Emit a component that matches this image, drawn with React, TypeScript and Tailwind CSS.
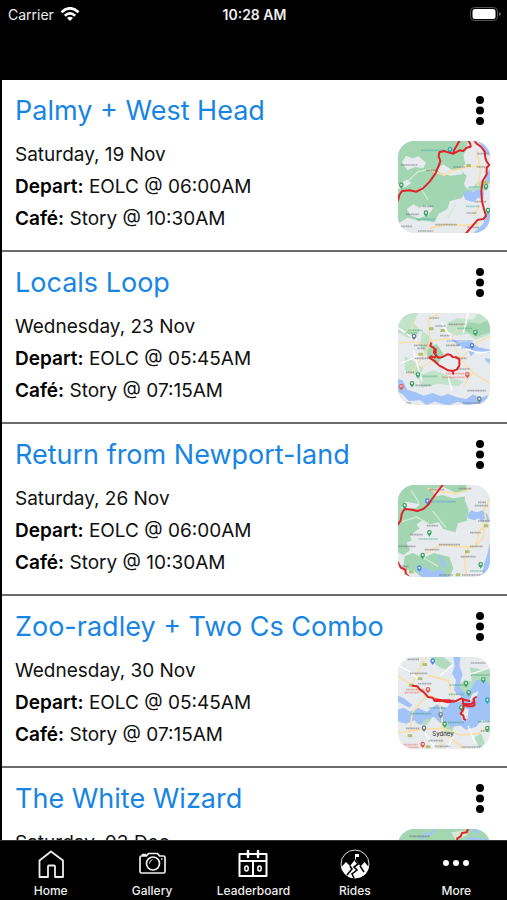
import type { ReactNode } from "react";

interface Ride {
  title: string;
  date: string;
  depart?: string;
  cafe?: string;
  map: ReactNode;
}

type Point = [number, number];

const GREEN = "#a3d6b1";
const WATER = "#a3c4f8";
const ROAD = "#f8dfa8";

function Pin({ x, y, color = "#3ba463" }: { x: number; y: number; color?: string }) {
  return (
    <g transform={`translate(${x} ${y})`}>
      <path d="M0 10C-3 4-7 3-7-3a7 7 0 0 1 14 0c0 6-4 7-7 13Z" fill={color} />
      <circle cy="-3" r="3" fill="#fff" />
    </g>
  );
}

// Place names are too small to read at this size, so they are drawn as ticks
function Places({ at, color = "#555b63" }: { at: [number, number, number][]; color?: string }) {
  return (
    <g stroke={color} strokeWidth="5" strokeDasharray="5 1 4 1 3 1" opacity="0.45">
      {at.map(([x, y, w]) => (
        <path key={`${x}-${y}`} d={`M${x} ${y}h${w}`} />
      ))}
    </g>
  );
}

function Shields({ at }: { at: Point[] }) {
  return (
    <g fill="#b3c06f">
      {at.map(([x, y]) => (
        <rect key={`${x}-${y}`} x={x - 7} y={y - 4} width="14" height="9" rx="2" />
      ))}
    </g>
  );
}

function Route({ d }: { d: string }) {
  return (
    <path d={d} fill="none" stroke="#e0242a" strokeWidth="6" strokeLinejoin="round" strokeLinecap="round" />
  );
}

function MapTile({ label, children }: { label: string; children: ReactNode }) {
  return (
    <svg viewBox="0 0 276 276" role="img" aria-label={label} className="size-23 shrink-0 rounded-2xl bg-[#e8ebee]">
      {children}
    </svg>
  );
}

function WestHeadMap() {
  return (
    <MapTile label="Palmy + West Head route">
      <path d="M0 0h210l-6 28-8 14 6 28-18 14 22 20-8 24 10 20-18 24-34 8-8 24-26 14-20 42H70l-12-22-30-8-28 18Z" fill={GREEN} />
      <path d="M12 64 24 44l20 8 18-6 22 20-8 16-24-4-24 10ZM116 84l20-14 30 20 22-6 6 16-36 4-30-8ZM26 204l20-14 18 10 22-8 20 8-14 22-30 10-24-8ZM0 130l26-14 14 10-18 12-22 6ZM44 250l26-12 40 6 14 16-30 10Z" fill="#e8ebee" />
      <path d="M206 150h52l10-14-6-16h-22l-14 18-20 2Z" fill="#b6dfc0" />
      <path d="M238 0h38v46l-18-14-6-16ZM276 84v40l-16 14 4-40ZM276 200v76h-50l30-28 8-30ZM196 160l14-14 16 6 14-8 18 8-2 24-16-6-14 14-24-8Z" fill={WATER} />
      <path d="M236 28 248 90l-10 48M246 192l-20 34M96 88l42 14 28-14 42-10 48-4M96 262l46-12 60 4 42-6" fill="none" stroke={ROAD} strokeWidth="5" />
      <path d="M30 120 60 92l38-8M68 142l22 34M150 230l22-40" fill="none" stroke="#cfe9d5" strokeWidth="4" />
      <Places at={[[8, 72, 50], [84, 88, 34], [166, 78, 34], [238, 38, 34], [236, 78, 36], [74, 196, 32], [24, 220, 38], [206, 216, 30], [112, 251, 64], [8, 256, 34], [60, 270, 46], [208, 259, 36], [230, 182, 34]]} />
      <Places color="#35a3b4" at={[[70, 28, 72], [56, 235, 56], [214, 138, 38], [204, 196, 40]]} />
      <Shields at={[[212, 73], [264, 124]]} />
      <Pin x={156} y={28} color="#25a5ba" />
      <Pin x={10} y={134} />
      <Pin x={84} y={218} />
      <Pin x={264} y={139} />
      <Pin x={270} y={210} />
      <Route d="M184 0 176 14 168 28 166 38 150 34 138 30 124 34 122 46 127 60 122 75 112 98 95 122 75 142 55 152 35 148 12 150 4 162 0 178M166 38l19-10 11 2 10-10 12-3-1-8-5-9M230 0l6 8 14 10 10 14 2 18 4 12 8 10-8 8v20l-12 20-4 30 2 30 6 25 6 20-8 9-16 2-18 20-17 20" />
    </MapTile>
  );
}

function LocalsMap() {
  return (
    <MapTile label="Locals Loop route">
      <path d="M0 0h60l-14 30 20 20-10 22-24 4-32-18ZM72 54 96 70l14 30 22 20-18 28-28-18-20-34ZM148 30l30-14 46 4 18-20h34v64l-44 16-22-18-34 6-30-14ZM20 130l26 14 30 22-14 24-42-18ZM58 188l50-16 60 24 30 10-18 14-60-8-48 12Z" fill="#c1e3ca" />
      <path d="M88 112 116 92l22 34-22 30-28-22ZM196 52l16-24 34 4 30-14v40l-38 12-20-8Z" fill="#a2d5b0" />
      <path d="m0 198 14 4 14 28 26 8 22 10 28-8 26 10 20-8 24 10 30 6 22-14 20 12 30-12v28h-52l-12 6-32-12-30 12-40-12-24 10-20-14-34 2-18-20-20-10ZM156 74l28 14 36-2 20 16 36 8v10l-40-6-18 16-8-18-30-14ZM262 134l14 4v14l-14-8Z" fill={WATER} />
      <path d="M30 190 74 134l22-50L92 20l32-20M94 84 160 76l30-46M160 76l26 62 38 40 52 34M112 134l-42 32M0 92l46-6 44 12M188 138l50-50 38-18M224 178l-26 40M52 18 34 60" fill="none" stroke={ROAD} strokeWidth="4" />
      <path d="M0 44l56 38M130 28l30 48M184 100l56 20 36-4M10 150l60-24M46 112l26 94M150 190l12 44M210 0l-14 60" fill="none" stroke="#fff" strokeWidth="4" />
      <Places at={[[94, 15, 30], [112, 39, 32], [152, 34, 48], [126, 68, 30], [48, 97, 42], [58, 106, 24], [144, 97, 40], [50, 136, 42], [172, 136, 34], [180, 168, 36], [24, 178, 24], [52, 217, 48], [208, 233, 56], [194, 270, 54], [12, 270, 28]]} />
      <Places color="#4c85e8" at={[[146, 84, 78], [190, 104, 30]]} />
      <Places color="#3a9b6e" at={[[30, 52, 44], [22, 60, 36], [74, 190, 44], [178, 46, 46]]} />
      <Places color="#e45e55" at={[[144, 182, 54], [132, 193, 68]]} />
      <Shields at={[[100, 47], [134, 52], [68, 123]]} />
      <Pin x={48} y={72} color="#718392" />
      <Pin x={232} y={60} />
      <Pin x={222} y={100} color="#4b83df" />
      <Pin x={60} y={187} />
      <Pin x={42} y={214} />
      <Pin x={208} y={187} color="#e4554e" />
      <Pin x={10} y={223} color="#e4554e" />
      <Pin x={244} y={260} color="#718392" />
      <Route d="M99 91 97 99 106 103 110 109 108 118 116 130 122 134 134 132 148 124 158 126 164 132 176 133 184 139 184 158 176 170 164 174 150 172 138 165 124 158 110 144 94 134 100 130 110 134 116 128M113 120v-12M164 174l2 8" />
    </MapTile>
  );
}

function NewportMap() {
  return (
    <MapTile label="Return from Newport-land route">
      <path d="M0 0h206l-6 44 12 30-6 34-26 6-8 28-36-10-14-20-26 6-20-14-20 14 12 20-10 24-32 10 10 24-20 14-16-8ZM20 214l24-10 34 14 30-14 46 12 12 34-12 26H70l-26-22-30 2Z" fill={GREEN} />
      <path d="M8 70 24 50l42 8-14 12ZM100 12l36-6 34 16 34-2v14l-40 6-30-10-18 4ZM36 152l22-18 34-8 22 12 26-4 8 20-28 14-32 8-46-6ZM90 190l50-22 50-12 4 36-34 22-58-12Z" fill="#e8ebee" />
      <path d="M208 88l12-12 16 6 18-6 14 12 8 22h-24l-10-10-14 6-18-6ZM276 172v104h-24l6-40 8-22ZM58 258l24-12 24 14 26-8 12 24H70ZM120 206l18 18 8 26-14-6Z" fill={WATER} />
      <path d="M88 10l44 12 24 0 20 4 44-16M84 204l46-26 40 6 60 2 26-28 4-56M204 276l-4-64 14-30M232 184l12-44 24-28M276 40l-18 30 6 36" fill="none" stroke={ROAD} strokeWidth="5" />
      <path d="M12 110l44-14 34 20M104 78l40 50M40 16l24 40M70 214l50 30" fill="none" stroke="#cde9d4" strokeWidth="4" />
      <Places at={[[94, 14, 44], [182, 11, 38], [240, 52, 24], [230, 62, 40], [240, 108, 34], [86, 122, 34], [36, 149, 38], [216, 143, 32], [2, 184, 50], [80, 194, 44], [122, 179, 64], [216, 184, 38], [188, 215, 46], [2, 244, 30], [124, 270, 40], [192, 270, 66]]} />
      <Places color="#4d87e5" at={[[98, 50, 76]]} />
      <Places color="#389e7b" at={[[62, 162, 58], [216, 258, 44]]} />
      <Shields at={[[264, 122], [208, 200], [40, 260], [180, 269]]} />
      <Pin x={20} y={64} />
      <Pin x={88} y={50} color="#4d87e5" />
      <Pin x={94} y={145} />
      <Pin x={74} y={213} />
      <Pin x={64} y={251} color="#4d87e5" />
      <Pin x={248} y={241} />
      <Route d="M134 0 120 18 102 42 92 58 76 72 58 78 42 74 20 72 12 84 8 106 0 118M0 232l8 16 14 6 2 14 10 8" />
    </MapTile>
  );
}

function TwoCsMap() {
  return (
    <MapTile label="Zoo-radley + Two Cs Combo route">
      <path d="M100 0h36l26 20-20 18-26-12ZM172 92l28-24 24 6 10 40-30 24-26-10ZM216 30l34 8 26-8v60l-28-14-26 8ZM46 180l34-12 22 16-16 20-30-4ZM142 188l26 20-8 26-22-8ZM230 240l20-10 10 28-16 16Z" fill="#b2dcbf" />
      <path d="M166 0h22l-4 26 10 26-10 34 14 22 22-14 14-24 26-4 16 20v110l-24-8-18 22-30 8-16-12-32 4-14-16-16 4-18-18-28 8-14 16-16-14-26 10-22-6-14-22-18-8v-28l22 24 26-8 18 12 24-12 26 12 30-22 30 12 16-28 20-4-14-24 6-28-12-20 8-24ZM0 116l18 8 26 20-10 8-34-18Z" fill={WATER} />
      <path d="M186 168l10-18 16 8-4 28-14 6ZM224 110l18-8-10 28-18 2ZM160 110l26 4 10 18-24 4Z" fill="#e8ebee" />
      <path d="M0 58l42 26 44 30 34 10 12 50-2 102M42 84 68 26l20-26M90 56l62 14 12 54M0 228l64-10 72-4 50 20 54-4 36-26M86 114l-44 54-6 60M140 230l60 46" fill="none" stroke={ROAD} strokeWidth="5" />
      <path d="M0 24l42 24 30 32M126 56l38-32M216 52l60-20M80 228l34 48M164 236l-16 40M210 206l22 54" fill="none" stroke="#fff" strokeWidth="4" />
      <Places at={[[28, 7, 36], [218, 18, 46], [36, 49, 52], [60, 80, 40], [24, 214, 40], [92, 251, 44], [110, 268, 46], [192, 270, 68], [248, 222, 28]]} />
      <Places color="#33956a" at={[[218, 54, 56], [154, 84, 44], [152, 112, 46], [38, 170, 62], [150, 196, 48], [92, 153, 54], [240, 194, 34]]} />
      <Places color="#e45e55" at={[[24, 98, 56], [20, 107, 44], [14, 263, 46], [22, 271, 40]]} />
      <Shields at={[[80, 22], [40, 84], [66, 65], [36, 236], [90, 269]]} />
      <Pin x={104} y={14} color="#4b83df" />
      <Pin x={256} y={70} />
      <Pin x={204} y={82} />
      <Pin x={212} y={109} />
      <Pin x={90} y={100} color="#e4554e" />
      <Pin x={190} y={154} />
      <Pin x={268} y={131} color="#25a5ba" />
      <Pin x={128} y={175} color="#718392" />
      <Pin x={78} y={215} color="#718392" />
      <Pin x={140} y={203} />
      <Pin x={268} y={216} />
      <Pin x={74} y={264} color="#e4554e" />
      <text x="103" y="237" fontSize="18" fontFamily="Inter, sans-serif" fontWeight="500" fill="#3c4249">
        Sydney
      </text>
      <Route d="M44 86l14 2 8 10 12 8 12 14 14 2 6 10 24 0 16 4 24-4 16-8 14 6 10 2M106 126l26 4 24 0 12 4M194 126l2 14 12 2 14-2 6-6-2-8 8-6M194 140l14 8 14 0 8-4-2-16M198 142l-2 16-8 12 8 6 2 10 4 2" />
    </MapTile>
  );
}

function WizardMap() {
  return (
    <MapTile label="The White Wizard route">
      <rect width="276" height="276" fill={GREEN} />
      <path d="M66 34 82 16l16-2 12-12M206 30l34-2 14 6h22M220 0l26 12" fill="none" stroke={WATER} strokeWidth="7" />
      <path d="M160 10l40-6 10 14-38 14Z" fill="#d4e9d8" />
      <Places at={[[34, 22, 62]]} />
      <Route d="M210 0l-4 10-14 2-4 10-10 6-2 14" />
    </MapTile>
  );
}

const rides: Ride[] = [
  { title: "Palmy + West Head", date: "Saturday, 19 Nov", depart: "EOLC @ 06:00AM", cafe: "Story @ 10:30AM", map: <WestHeadMap /> },
  { title: "Locals Loop", date: "Wednesday, 23 Nov", depart: "EOLC @ 05:45AM", cafe: "Story @ 07:15AM", map: <LocalsMap /> },
  { title: "Return from Newport-land", date: "Saturday, 26 Nov", depart: "EOLC @ 06:00AM", cafe: "Story @ 10:30AM", map: <NewportMap /> },
  { title: "Zoo-radley + Two Cs Combo", date: "Wednesday, 30 Nov", depart: "EOLC @ 05:45AM", cafe: "Story @ 07:15AM", map: <TwoCsMap /> },
  { title: "The White Wizard", date: "Saturday, 03 Dec", map: <WizardMap /> },
];

function RideRow({ ride }: { ride: Ride }) {
  return (
    <li className="flex h-43 shrink-0 justify-between border-b-2 border-[#6b6b6b] pr-[17px] pl-[13px]">
      <div className="pt-[13px]">
        <h2 className="text-[27px] leading-9 text-[#1785e4]">{ride.title}</h2>
        <div className="mt-2.5 text-[19px] leading-8 text-[#111]">
          <p>{ride.date}</p>
          {ride.depart && (
            <p>
              <b className="font-semibold text-black">Depart:</b> {ride.depart}
            </p>
          )}
          {ride.cafe && (
            <p>
              <b className="font-semibold text-black">Café:</b> {ride.cafe}
            </p>
          )}
        </div>
      </div>
      <div className="flex flex-col items-end gap-3 pt-[13px]">
        <button type="button" aria-label={`Options for ${ride.title}`} className="h-9 w-5">
          <svg viewBox="0 0 20 36" className="h-9 w-5">
            <circle cx="10" cy="7" r="4" />
            <circle cx="10" cy="17.500" r="4" />
            <circle cx="10" cy="28" r="4" />
          </svg>
        </button>
        {ride.map}
      </div>
    </li>
  );
}

function HomeIcon() {
  return (
    <svg viewBox="0 0 32 32" className="size-8" fill="none" stroke="#eee" strokeWidth="1.8" strokeLinejoin="round">
      <path d="M4.500 11.500 16 2.500l12 9V28h-8V17.500q0-1-1-1h-5q-1 0-1 1V28H4.500Z" />
    </svg>
  );
}

function GalleryIcon() {
  return (
    <svg viewBox="0 0 32 32" className="size-8" fill="none" stroke="#eee" strokeWidth="1.700" strokeLinejoin="round">
      <path d="M5.500 7h5l2-2.500h9l2 2.500h4q1.500 0 1.500 1.500v14q0 1.500-1.500 1.500h-22q-1.500 0-1.500-1.500v-14Q4 7 5.500 7ZM6.500 6.500V5.500h3v1" />
      <circle cx="17" cy="14.500" r="6.500" />
      <path d="M13.500 14.500q0-3 3-3.800" strokeWidth="1" />
      <path d="M25 10h1.500" />
    </svg>
  );
}

function LeaderboardIcon() {
  return (
    <svg viewBox="0 0 32 32" className="size-8" fill="none" stroke="#fff" strokeWidth="2" strokeLinejoin="round">
      <path d="M2.500 5h27v22h-27ZM2.500 12h27M16 12v15" />
      <path d="M11 2v6M21 2v6" strokeLinecap="round" strokeWidth="2.500" />
      <ellipse cx="9.500" cy="19.500" rx="1.700" ry="2.500" strokeWidth="1.500" />
      <ellipse cx="22.500" cy="19.500" rx="1.700" ry="2.500" strokeWidth="1.500" />
    </svg>
  );
}

function RidesIcon() {
  return (
    <svg viewBox="0 0 32 32" className="size-8">
      <circle cx="16" cy="15" r="14" fill="none" stroke="#ddd" strokeWidth="1" />
      <path d="M2.300 18 7 13l4 4 5.500-7 5 7.500 4-4.500 4.200 5Q28.500 26 20.500 28.500L17 29H13Q4.500 27 2.300 18Z" fill="#fff" />
      <path d="M16.500 10v-5" stroke="#fff" strokeWidth="1" />
      <path d="M16.500 5h3.500v3h-3.500Z" fill="#fff" />
      <path d="m16 11 3 4-4 3 3 3-5 4 2 4M11 17l2 3-5 6M21 17l4 6" fill="none" stroke="#000" strokeWidth="1.600" />
    </svg>
  );
}

function MoreIcon() {
  return (
    <svg viewBox="0 0 32 32" className="size-8" fill="#fff">
      <circle cx="6" cy="14" r="3" />
      <circle cx="16" cy="14" r="3" />
      <circle cx="26" cy="14" r="3" />
    </svg>
  );
}

const tabs = [
  { label: "Home", icon: <HomeIcon /> },
  { label: "Gallery", icon: <GalleryIcon /> },
  { label: "Leaderboard", icon: <LeaderboardIcon /> },
  { label: "Rides", icon: <RidesIcon /> },
  { label: "More", icon: <MoreIcon /> },
];

function StatusBar() {
  return (
    <div className="grid h-7 grid-cols-3 items-center pr-1.5 pl-2 text-[14px] text-[#eee]">
      <div className="flex items-center gap-1.5">
        <span>Carrier</span>
        <svg viewBox="0 0 20 14" className="h-3.5 w-5" fill="none" stroke="#fff" strokeWidth="2.700">
          <path d="M1.500 5.200Q10-2.600 18.500 5.200M4.800 8.700Q10 4 15.200 8.700" />
          <path d="M7 10.900Q10 8.400 13 10.900L10 13.900Z" fill="#fff" stroke="none" />
        </svg>
      </div>
      <span className="text-center font-semibold">10:28 AM</span>
      <svg viewBox="0 0 31 14" className="h-3.5 w-[31px] justify-self-end">
        <rect x="0.500" y="0.500" width="27" height="13" rx="4" fill="none" stroke="#555" />
        <rect x="2.500" y="2" width="23" height="10" rx="2.500" fill="#fff" />
        <path d="M29 5v4q2-1 2-2t-2-2Z" fill="#666" />
      </svg>
    </div>
  );
}

export default function App() {
  return (
    <div className="flex h-screen flex-col bg-black font-['Inter',sans-serif]">
      <header className="h-20 shrink-0">
        <StatusBar />
      </header>
      <main className="min-h-0 flex-1 overflow-y-auto pl-0.5 [scrollbar-width:none]">
        <ul className="flex flex-col bg-white">
          {rides.map((ride) => (
            <RideRow key={ride.title} ride={ride} />
          ))}
        </ul>
      </main>
      <nav className="grid h-15 shrink-0 grid-cols-5 border-t border-[#333] bg-black">
        {tabs.map((tab) => (
          <button key={tab.label} type="button" className="flex flex-col items-center pt-2 text-[12px] leading-4 font-medium text-[#eee]">
            {tab.icon}
            <span className="mt-0.5">{tab.label}</span>
          </button>
        ))}
      </nav>
    </div>
  );
}
